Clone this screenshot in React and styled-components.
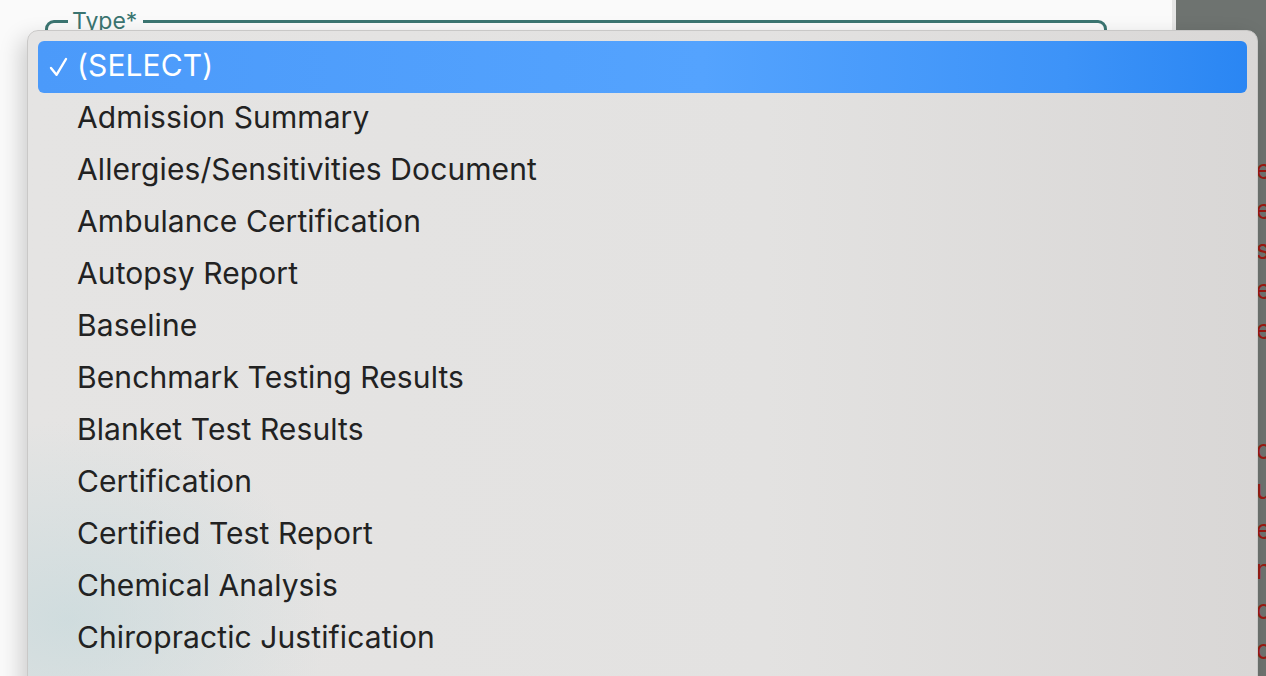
import React from 'react'
import styled, { createGlobalStyle } from 'styled-components'

const GlobalStyle = createGlobalStyle`
  html, body {
    margin: 0;
    padding: 0;
    height: 100%;
    overflow: hidden;
  }
  body {
    font-family: Inter, "Noto Sans", "Liberation Sans", sans-serif;
  }
  #root {
    height: 100%;
  }
`

const Page = styled.div`
  position: relative;
  display: flex;
  width: 1266px;
  height: 676px;
  overflow: hidden;
`

const Main = styled.div`
  flex: 0 0 1176px;
  background: #fafafa;
  border-right: 4px solid #e6e6e6;
  padding: 8px 0 0 45px;
  box-sizing: border-box;
`

const Fieldset = styled.fieldset`
  margin: 0;
  width: 1062px;
  height: 80px;
  box-sizing: border-box;
  border: 3px solid #3b7571;
  border-radius: 9px;
  padding: 0 20px;
`

const Legend = styled.legend`
  padding: 0 6px 0 4px;
  font-size: 23px;
  line-height: 26px;
  color: #3b7571;
`

const Side = styled.div`
  flex: 1 1 auto;
  min-width: 0;
  overflow: hidden;
  background: #6e7370;
  padding-top: 150px;
  padding-left: 80px;
  display: flex;
  flex-direction: column;
`

const SideLine = styled.div`
  height: 40px;
  font-size: 26px;
  line-height: 40px;
  color: #9c1a12;
  white-space: nowrap;
`

const Menu = styled.div`
  position: absolute;
  left: 27px;
  top: 30px;
  width: 1231px;
  height: 700px;
  box-sizing: border-box;
  padding: 10px 10px;
  border-radius: 11px;
  border: 1px solid #c9c8c7;
  background:
    radial-gradient(ellipse 260px 200px at 40px 590px, rgba(190, 214, 218, 0.55), rgba(190, 214, 218, 0) 100%),
    linear-gradient(to right, #e5e4e3 0%, #e3e2e1 60%, #d9d7d6 100%);
  box-shadow: -6px 8px 22px rgba(0, 0, 0, 0.18);
`

const Option = styled.div`
  position: relative;
  height: 52px;
  display: flex;
  align-items: center;
  padding-left: 39px;
  padding-bottom: 4px;
  box-sizing: border-box;
  border-radius: 6px;
  font-size: 30px;
  letter-spacing: 0.1px;
  color: ${p => (p.$active ? '#ffffff' : '#222222')};
  background: ${p =>
    p.$active
      ? 'linear-gradient(to right, #4b9afa 0%, #54a3fe 55%, #3d93f8 85%, #2a86f3 100%)'
      : 'transparent'};
`

const Check = styled.svg`
  position: absolute;
  left: 11px;
  top: 16px;
  width: 19px;
  height: 20px;
`

const options = [
  'Admission Summary',
  'Allergies/Sensitivities Document',
  'Ambulance Certification',
  'Autopsy Report',
  'Baseline',
  'Benchmark Testing Results',
  'Blanket Test Results',
  'Certification',
  'Certified Test Report',
  'Chemical Analysis',
  'Chiropractic Justification',
]

const sideLines = ['er', 'es', 'st', 'er', 'el', '', '', 'or', 'ur', 'er', 'nt', 'on', 'on']

export default function App() {
  return (
    <Page>
      <GlobalStyle />
      <Main>
        <Fieldset>
          <Legend>Type*</Legend>
        </Fieldset>
      </Main>
      <Side>
        {sideLines.map((t, i) => (
          <SideLine key={i}>{t || '\u00a0'}</SideLine>
        ))}
      </Side>
      <Menu>
        <Option $active>
          <Check viewBox="0 0 19 20">
            <path d="M2 11 L7.5 17.8 L17 2" fill="none" stroke="#fff" strokeWidth="2.4" strokeLinecap="round" strokeLinejoin="round" />
          </Check>
          (SELECT)
        </Option>
        {options.map(o => (
          <Option key={o}>{o}</Option>
        ))}
      </Menu>
    </Page>
  )
}
